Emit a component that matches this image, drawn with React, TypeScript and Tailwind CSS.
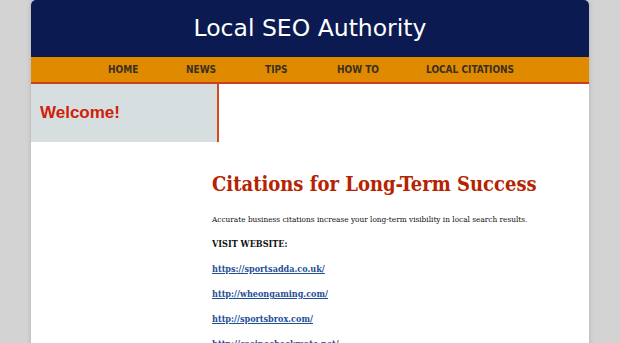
const links = [
  "https://sportsadda.co.uk/",
  "http://wheongaming.com/",
  "http://sportsbrox.com/",
  "http://casinocheckmate.net/",
];

export default function App() {
  return (
    <div className="h-[343px] overflow-hidden bg-[#d3d3d3]">
      <div className="mx-auto w-[558px] min-h-[343px] bg-white shadow-[0_0_5px_rgba(0,0,0,0.18)] rounded-t-[5px]">
        {/* header */}
        <div className="flex h-[57px] items-center justify-center rounded-t-[5px] bg-[#0c1a52]">
          <h1 className="font-['DejaVu_Sans',sans-serif] text-[23.5px] text-white">
            Local SEO Authority
          </h1>
        </div>

        {/* nav */}
        <nav className="flex h-[27px] items-center border-b-2 border-[#c8401c] bg-[#e08a00] pl-[77px] font-['DejaVu_Sans_Condensed','DejaVu_Sans',sans-serif] text-[10px] font-bold text-[#3a3020]">
          <span className="w-[78px]">HOME</span>
          <span className="w-[79px]">NEWS</span>
          <span className="w-[72px]">TIPS</span>
          <span className="w-[89px]">HOW TO</span>
          <span>LOCAL CITATIONS</span>
        </nav>

        {/* sidebar */}
        <div className="flex h-[58px] w-[188px] items-center border-r-2 border-[#d4481e] bg-[#d7dee0] pl-[9px]">
          <h2 className="font-['Liberation_Sans',sans-serif] text-[17px] font-bold text-[#d0200a]">
            Welcome!
          </h2>
        </div>

        {/* content */}
        <main className="pl-[181px] pt-[26px] font-['DejaVu_Serif_Condensed','DejaVu_Serif',serif]">
          <h3 className="text-[20px] font-bold leading-[32px] text-[#b52300]">
            Citations for Long-Term Success
          </h3>
          <p className="mt-[12px] text-[8.2px] leading-[14px] text-[#111]">
            Accurate business citations increase your long-term visibility in local search results.
          </p>
          <p className="mt-[11px] text-[9px] font-bold leading-[14px] text-[#111]">VISIT WEBSITE:</p>
          {links.map((l) => (
            <p key={l} className="mt-[11px] text-[9px] font-bold leading-[14px]">
              <a href="#" className="text-[#1f4f96] underline">
                {l}
              </a>
            </p>
          ))}
        </main>
      </div>
    </div>
  );
}
